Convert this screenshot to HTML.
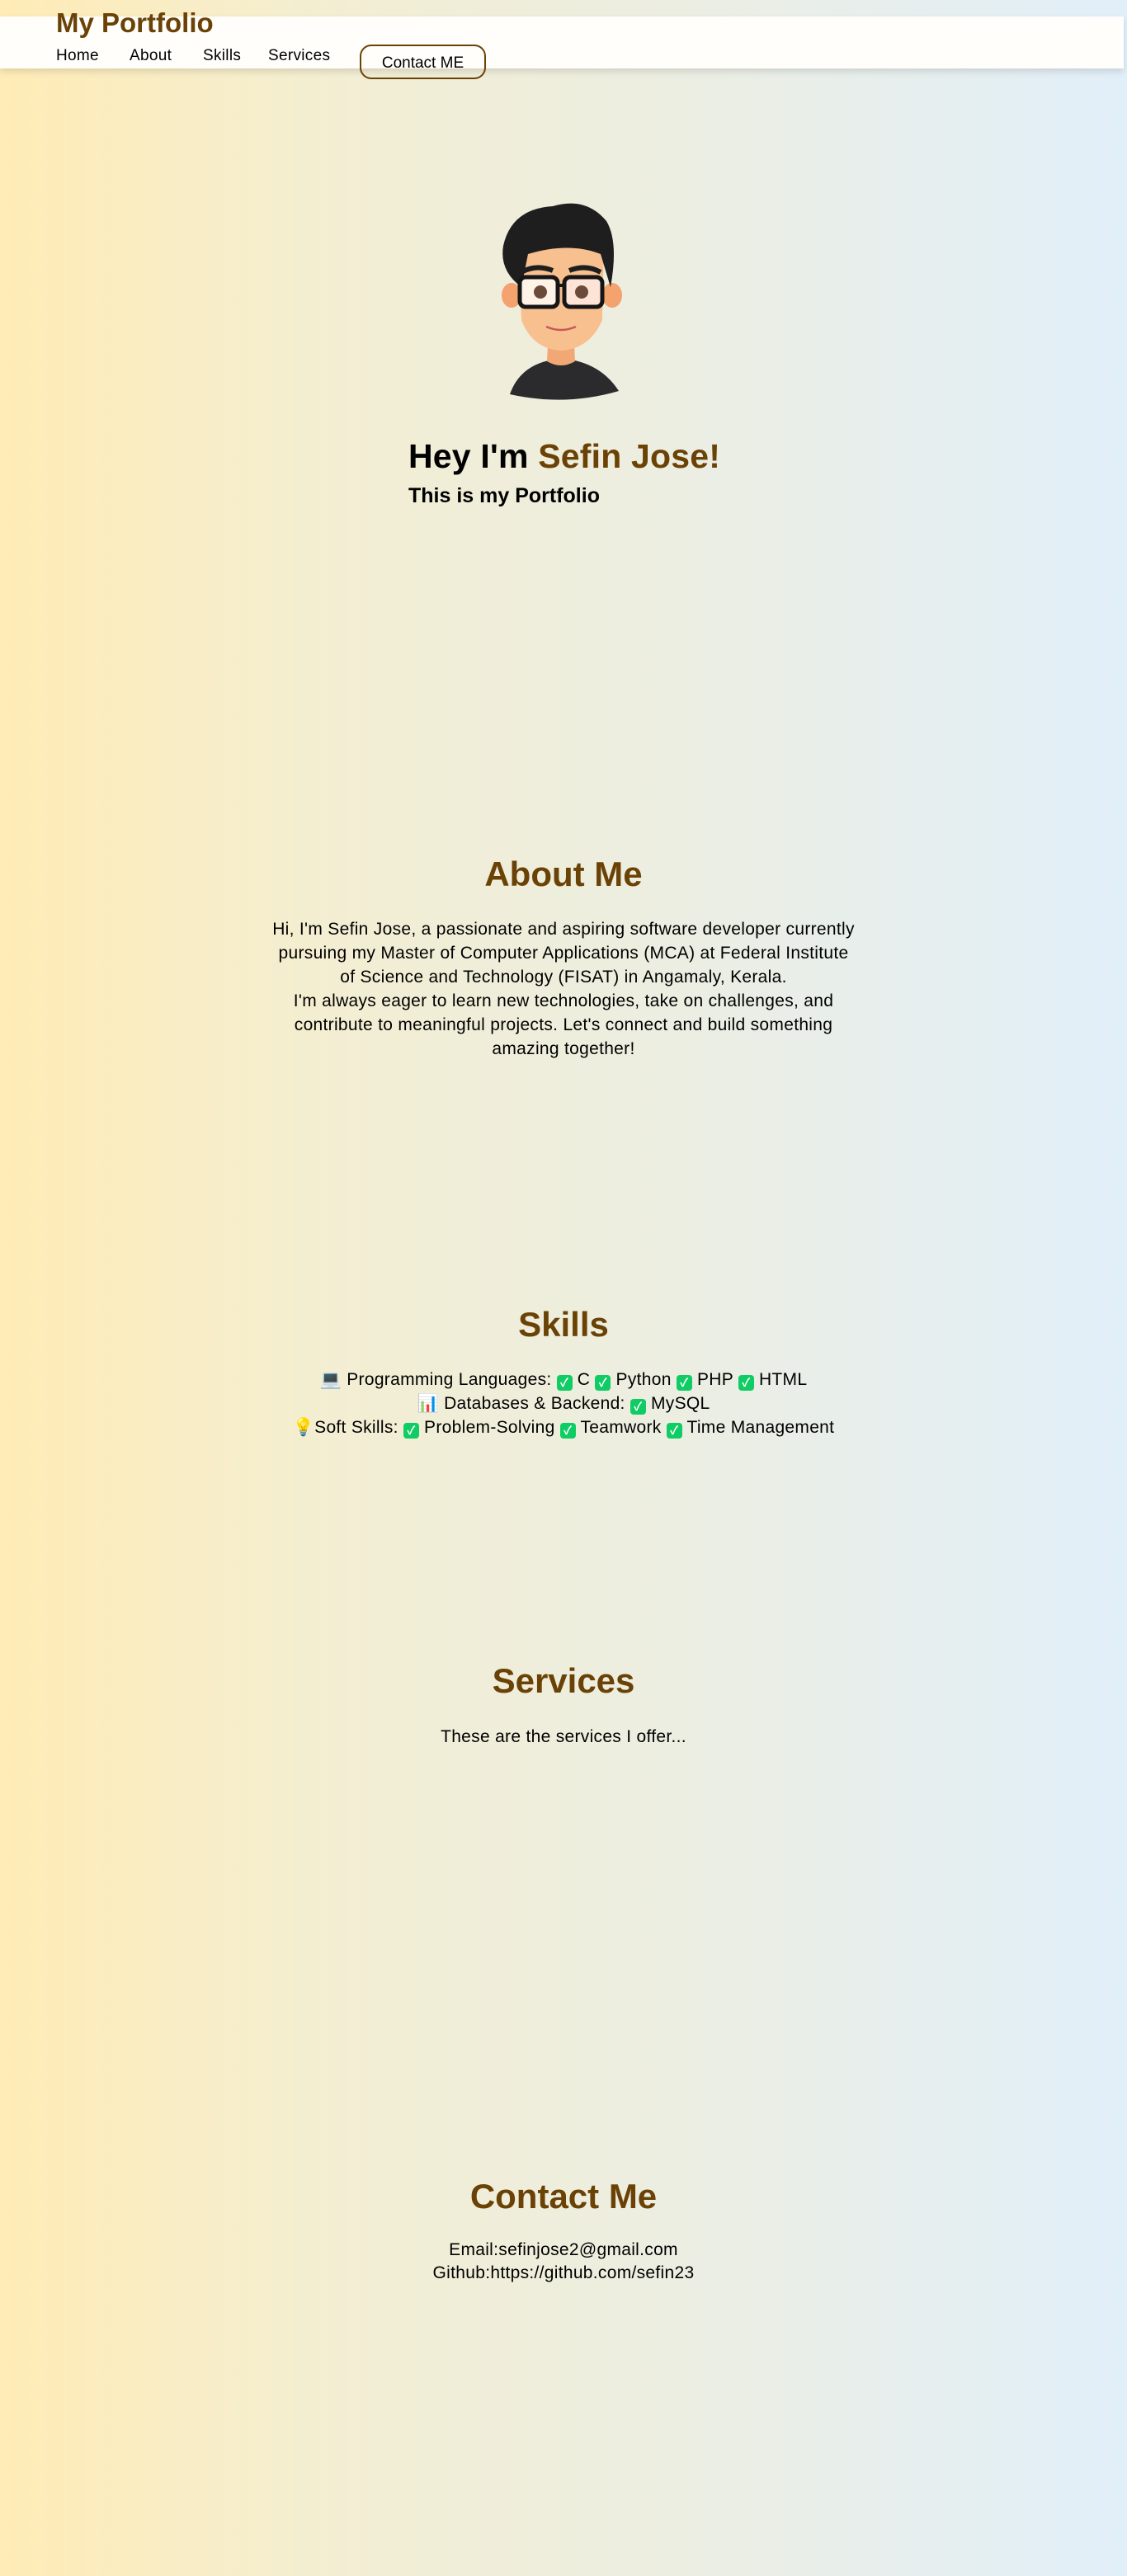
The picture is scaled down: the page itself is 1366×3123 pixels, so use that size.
<!DOCTYPE html>
<html><head><meta charset="utf-8"><style>
*{margin:0;padding:0;box-sizing:border-box}
html,body{width:1366px;height:3123px;overflow:hidden}
body{background:linear-gradient(90deg,#ffecb6 0%,#f3eed3 30%,#eceee2 60%,#e1eff9 100%);font-family:"Liberation Sans","Noto Sans CJK SC",sans-serif;color:#000;position:relative}
.nav{position:absolute;left:0;top:20px;width:1362px;height:63px;background:#fffefb;box-shadow:0 4px 8px rgba(0,0,0,.12)}
.logo{position:absolute;left:68px;top:9px;font-size:33px;font-weight:bold;color:#6b4206}
.links{position:absolute;top:57px;font-size:19px;font-weight:500;letter-spacing:0.3px}
.btn{position:absolute;left:436px;top:54px;width:153px;height:42px;border:2px solid #6b4206;border-radius:14px;font-size:19px;text-align:center;line-height:42px;font-weight:500}
.c{position:absolute;left:0;width:1366px;text-align:center}
h2{font-size:42px;color:#6b4206;font-weight:bold}
.p{font-size:21px;line-height:29px;letter-spacing:0.3px}
.chk{display:inline-block;width:19px;height:19px;background:#10cc65;border-radius:4px;color:#fff;font-size:14px;line-height:19px;text-align:center;vertical-align:-2px;font-weight:bold}
</style></head><body>
<div class="nav"></div>
<div class="logo">My Portfolio</div>
<div class="links" style="left:68px">Home</div>
<div class="links" style="left:157px">About</div>
<div class="links" style="left:246px">Skills</div>
<div class="links" style="left:325px">Services</div>
<div class="btn">Contact ME</div>

<svg style="position:absolute;left:600px;top:238px" width="160" height="250" viewBox="0 0 160 250">
<path d="M18 240 Q30 205 70 198 L92 198 Q130 205 150 236 Q85 255 18 240Z" fill="#2b2b2d"/>
<path d="M65 160 L95 160 L97 200 Q80 210 63 200Z" fill="#f2a874"/>
<ellipse cx="20" cy="120" rx="12" ry="15" fill="#f4a26e"/>
<ellipse cx="142" cy="120" rx="12" ry="15" fill="#f4a26e"/>
<path d="M28 60 Q80 40 132 60 L130 150 Q115 185 80 187 Q45 185 32 150Z" fill="#f9c08f"/>
<path d="M10 60 Q20 15 70 12 Q110 0 135 30 Q150 55 140 110 L128 70 Q90 55 40 70 L32 110 Q5 90 10 60Z" fill="#1e1e1e"/>
<rect x="30" y="98" width="46" height="36" rx="7" fill="#fff3e8" stroke="#161616" stroke-width="5"/>
<rect x="84" y="98" width="46" height="36" rx="7" fill="#fde4d6" stroke="#161616" stroke-width="5"/>
<path d="M76 108 L84 108" stroke="#161616" stroke-width="4"/>
<circle cx="55" cy="116" r="8" fill="#6b4a3a"/><circle cx="105" cy="116" r="8" fill="#6b4a3a"/>
<path d="M32 92 Q50 82 70 90 M90 90 Q110 82 128 92" stroke="#1e1e1e" stroke-width="6" fill="none"/>
<path d="M62 158 Q80 166 98 158" stroke="#c45a5a" stroke-width="2.5" fill="none"/>
</svg>

<div style="position:absolute;left:495px;top:530px;font-size:41px;font-weight:bold;letter-spacing:0.2px">Hey I'm <span style="color:#6b4206">Sefin Jose!</span></div>
<div style="position:absolute;left:495px;top:587px;font-size:25px;font-weight:bold">This is my Portfolio</div>

<div class="c" style="top:1036px"><h2>About Me</h2></div>
<div class="c p" style="top:1112px">Hi, I'm Sefin Jose, a passionate and aspiring software developer currently<br>pursuing my Master of Computer Applications (MCA) at Federal Institute<br>of Science and Technology (FISAT) in Angamaly, Kerala.<br>I'm always eager to learn new technologies, take on challenges, and<br>contribute to meaningful projects. Let's connect and build something<br>amazing together!</div>

<div class="c" style="top:1582px"><h2>Skills</h2></div>
<div class="c p" style="top:1658px">💻 Programming Languages: <span class="chk">✓</span> C <span class="chk">✓</span> Python <span class="chk">✓</span> PHP <span class="chk">✓</span> HTML<br>📊 Databases &amp; Backend: <span class="chk">✓</span> MySQL<br>💡Soft Skills: <span class="chk">✓</span> Problem-Solving <span class="chk">✓</span> Teamwork <span class="chk">✓</span> Time Management</div>

<div class="c" style="top:2014px"><h2>Services</h2></div>
<div class="c p" style="top:2091px">These are the services I offer...</div>

<div class="c" style="top:2639px"><h2>Contact Me</h2></div>
<div class="c p" style="top:2714px;line-height:28px">Email:sefinjose2@gmail.com<br>Github:https://github.com/sefin23</div>
</body></html>
